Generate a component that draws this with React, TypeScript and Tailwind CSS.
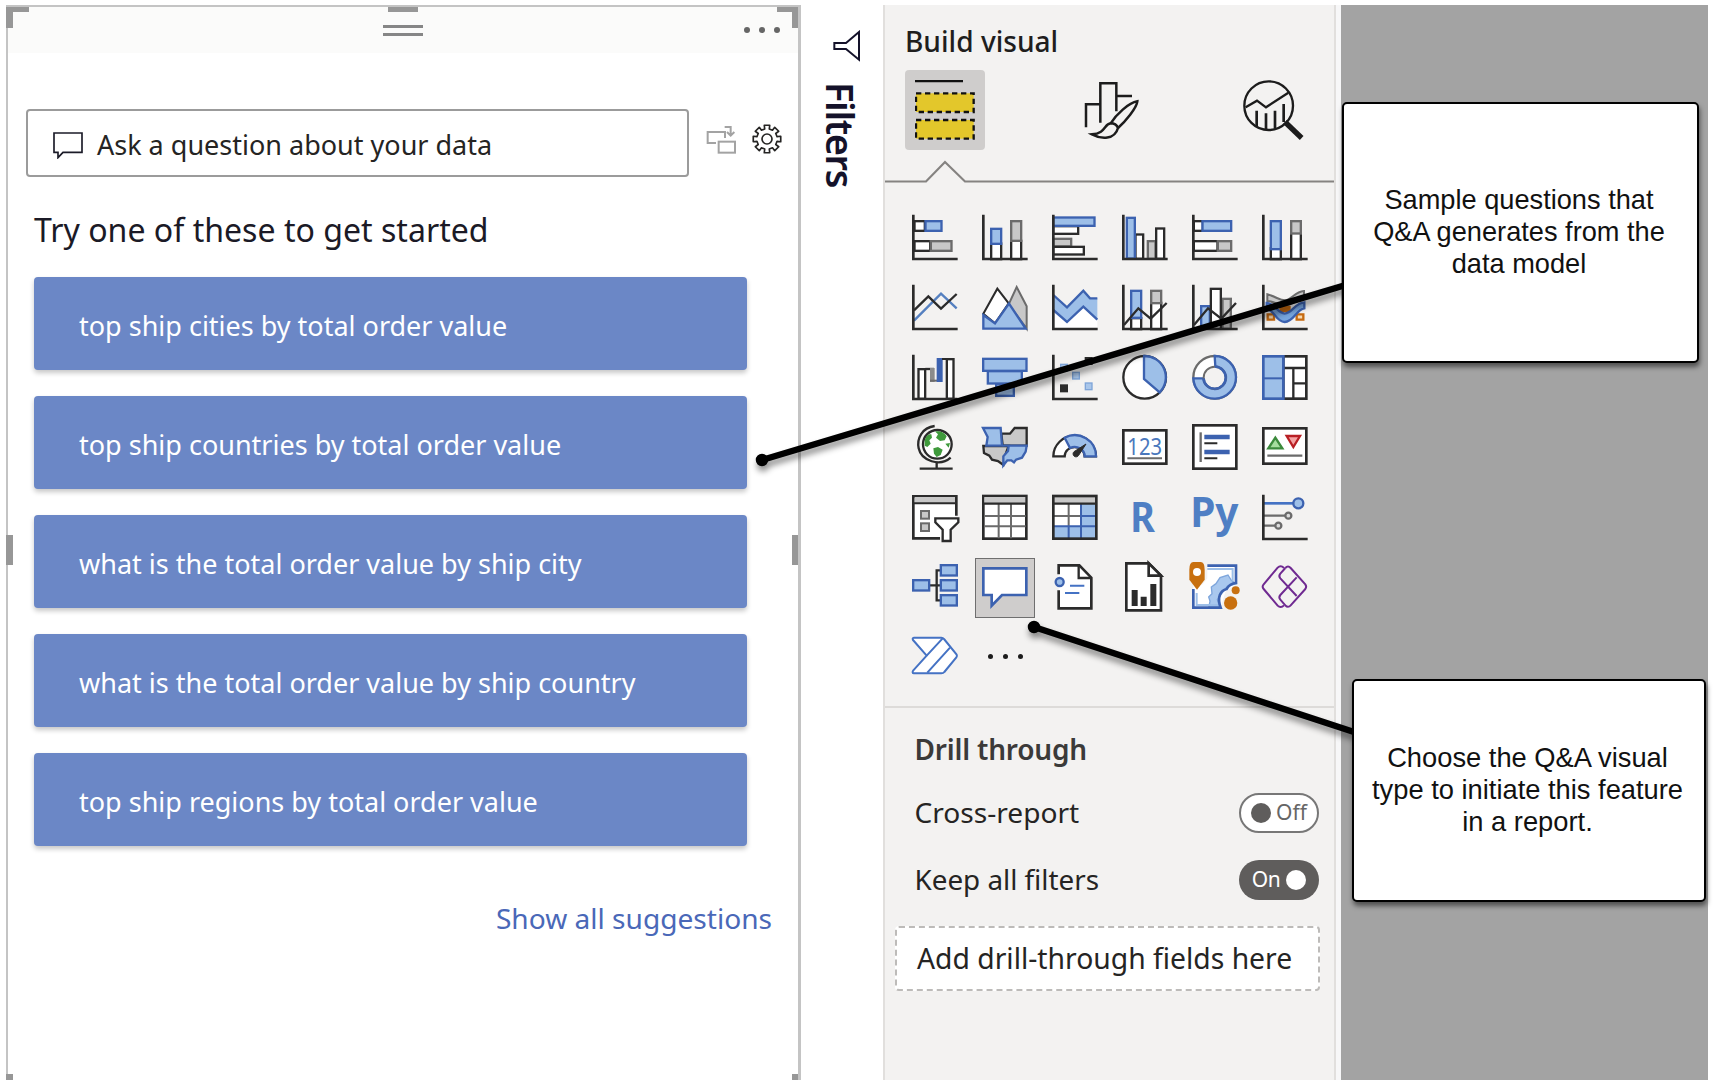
import React from "react";

const INK = "#2b2b2b";
const BLUE = "#9dbfe8";
const LINE = "#3c62b0";
const GREY = "#c8c8c8";
const EDGE = "#6b6b6b";

const suggestions = [
  "top ship cities by total order value",
  "top ship countries by total order value",
  "what is the total order value by ship city",
  "what is the total order value by ship country",
  "top ship regions by total order value",
];

type BoxProps = { x: number; y: number; w: number; h: number; fill?: string; stroke?: string; sw?: number };

/* Rectangle given by its outer edges, with the stroke drawn inside. */
function Box({ x, y, w, h, fill = "#fff", stroke = INK, sw = 7 }: BoxProps) {
  return (
    <rect x={x + sw / 2} y={y + sw / 2} width={w - sw} height={h - sw} fill={fill} stroke={stroke} strokeWidth={sw} />
  );
}

function Axis() {
  return <path d="M4 -1V132H137" fill="none" stroke={INK} strokeWidth="8" />;
}

const P = (d: string, stroke: string, fill = "none", sw = 7) => (
  <path d={d} stroke={stroke} fill={fill} strokeWidth={sw} />
);

const icons: React.ReactNode[] = [
  /* stacked bar */
  <>
    <Box x={4} y={15} w={38} h={36} />
    <Box x={37} y={15} w={55} h={36} fill={BLUE} stroke={LINE} />
    <Box x={4} y={75} w={54} h={36} />
    <Box x={53} y={75} w={69} h={36} fill={GREY} stroke={EDGE} />
    <Axis />
  </>,
  /* stacked column */
  <>
    <Box x={24} y={82} w={37} h={54} />
    <Box x={24} y={38} w={37} h={52} fill={BLUE} stroke={LINE} />
    <Box x={84} y={74} w={37} h={62} />
    <Box x={84} y={15} w={37} h={66} fill={GREY} stroke={EDGE} />
    <Axis />
  </>,
  /* clustered bar */
  <>
    <Box x={0} y={30} w={82} h={30} />
    <Box x={0} y={68} w={61} h={30} fill={GREY} stroke={EDGE} />
    <Box x={0} y={92} w={99} h={30} />
    <Box x={0} y={4} w={131} h={32} fill={BLUE} stroke={LINE} />
    <Axis />
  </>,
  /* clustered column */
  <>
    <Box x={37} y={55} w={30} h={80} />
    <Box x={74} y={75} w={30} h={60} fill={GREY} stroke={EDGE} />
    <Box x={99} y={37} w={31} h={98} />
    <Box x={11} y={5} w={31} h={129} fill={BLUE} stroke={LINE} />
    <Axis />
  </>,
  /* 100% stacked bar */
  <>
    <Box x={2} y={15} w={34} h={36} />
    <Box x={28} y={15} w={93} h={36} fill={BLUE} stroke={LINE} />
    <Box x={2} y={75} w={78} h={36} />
    <Box x={74} y={75} w={47} h={36} fill={GREY} stroke={EDGE} />
    <Axis />
  </>,
  /* 100% stacked column */
  <>
    <Box x={23} y={96} w={37} h={40} />
    <Box x={23} y={15} w={37} h={91} fill={BLUE} stroke={LINE} />
    <Box x={84} y={50} w={36} h={86} />
    <Box x={84} y={15} w={36} h={44} fill={GREY} stroke={EDGE} />
    <Axis />
  </>,
  /* line */
  <>
    {P("M6 107L87 26L134 70", "#5580c0")}
    {P("M6 76L49 34L87 71L134 27", INK)}
    <Axis />
  </>,
  /* area */
  <>
    {P("M80 58L104 6L134 64V131L80 58Z", EDGE, GREY, 6)}
    {P("M4 86L46 11L80 55L39 115Z", INK, "#fff", 6)}
    {P("M4 90L39 115L81 56L131 131H4Z", LINE, BLUE)}
  </>,
  /* stacked area */
  <>
    <path d="M4 75L45 111L94 65L136 104V131H4Z" fill="#fff" />
    <path d="M4 30L45 67L94 17L114 40H136V104L94 65L45 111L4 75Z" fill={BLUE} />
    {P("M4 30L45 67L94 17L114 40H136", LINE)}
    {P("M4 75L45 111L94 65L136 104", LINE)}
    <Axis />
  </>,
  /* line and stacked column */
  <>
    <Box x={24} y={96} w={37} h={40} />
    <Box x={24} y={14} w={37} h={88} fill={BLUE} stroke={LINE} />
    <Box x={84} y={50} w={37} h={86} />
    <Box x={84} y={14} w={37} h={44} fill={GREY} stroke={EDGE} />
    {P("M6 120L49 70L86 101L134 54", INK)}
    <Axis />
  </>,
  /* line and clustered column */
  <>
    <Box x={24} y={60} w={33} h={74} fill={BLUE} stroke={LINE} />
    <Box x={88} y={38} w={32} h={97} fill={GREY} stroke={EDGE} />
    <Box x={53} y={8} w={37} h={127} />
    {P("M6 120L48 70L88 101L132 54", INK)}
    <Axis />
  </>,
  /* ribbon */
  <>
    <path d="M17 88H36V104H17ZM104 88H124V104H104Z" fill="#f6d9b0" stroke="#c66a10" strokeWidth="7" />
    <path d="M52 62H86V82H52Z" fill="#c66a10" />
    <path d="M16 28C46 36 50 46 70 46C90 44 98 20 126 18V36C100 44 96 60 70 60C46 60 40 50 16 48Z" fill={GREY} stroke={EDGE} strokeWidth="6" />
    <path d="M14 54C38 54 46 84 68 86C92 84 98 54 127 52V70C102 74 96 110 68 111C40 110 38 74 14 72Z" fill="#78a7e0" stroke={LINE} strokeWidth="7" />
    <Axis />
  </>,
  /* waterfall */
  <>
    <Box x={16} y={39} w={27} h={96} />
    <path d="M40 42H66" stroke={INK} strokeWidth="7" />
    <rect x="54" y="39" width="14" height="42" fill="#8b8b8b" />
    <path d="M54 77H78" stroke={EDGE} strokeWidth="6" />
    <rect x="74" y="9" width="18" height="72" fill={LINE} />
    <path d="M90 12H104" stroke={INK} strokeWidth="6" />
    <Box x={101} y={9} w={27} h={126} />
    <Axis />
  </>,
  /* funnel */
  <>
    <Box x={39} y={84} w={60} h={42} fill={BLUE} stroke={LINE} />
    <Box x={14} y={45} w={109} h={44} fill={BLUE} stroke={LINE} />
    <Box x={0} y={8} w={137} h={43} fill={BLUE} stroke={LINE} />
  </>,
  /* scatter */
  <>
    <rect x="24" y="88" width="24" height="24" fill={INK} />
    <Box x={60} y={50} w={24} h={24} fill="#a9c6ea" stroke="#7fa5d8" sw={4} />
    <Box x={98} y={82} w={24} h={24} fill="#a9c6ea" stroke="#7fa5d8" sw={4} />
    <Box x={24} y={26} w={24} h={24} fill="#a9c6ea" stroke="#7fa5d8" sw={4} />
    <rect x="98" y="6" width="24" height="24" fill={INK} />
    <Axis />
  </>,
  /* pie */
  <>
    <circle cx="68" cy="67" r="64" fill="#fff" stroke={INK} strokeWidth="7" />
    {P("M66 3A64 64 0 0 1 113 112L66 72Z", LINE, BLUE)}
  </>,
  /* donut */
  <>
    <circle cx="68" cy="67" r="64" fill="#fff" stroke={EDGE} strokeWidth="7" />
    {P("M68 3A64 64 0 1 1 4 70H34A34 34 0 1 0 70 34Z", LINE, BLUE)}
    <circle cx="68" cy="68" r="33" fill="#f3f2f1" stroke={EDGE} strokeWidth="6" />
    {P("M35 70A33 33 0 1 0 68 35", LINE)}
  </>,
  /* treemap */
  <>
    <Box x={60} y={0} w={77} h={135} sw={8} />
    <path d="M64 39H134M94 39V132M94 85H134" stroke={INK} strokeWidth="7" />
    <Box x={0} y={0} w={68} h={135} fill={BLUE} stroke={LINE} sw={8} />
    <path d="M2 70H64" stroke={LINE} strokeWidth="6" />
  </>,
  /* map (globe) */
  <>
    <path d="M68 3C30 8 14 40 20 70C28 108 84 126 116 98" fill="none" stroke={INK} strokeWidth="7" />
    <circle cx="76" cy="58" r="43" fill="#fff" stroke={INK} strokeWidth="7" />
    <path d="M38 48C40 34 50 26 58 28L60 38L52 46L56 56L46 66L38 62ZM70 20C84 16 98 24 104 34L98 46L84 48L72 38L78 28ZM64 70L78 66L92 74L86 90L74 96L66 86ZM100 56L114 54L110 68Z" fill="#3f9a3c" />
    <path d="M74 112V131M23 131H122" stroke={INK} strokeWidth="7" />
  </>,
  /* filled map */
  <>
    {P("M58 26H84L98 9H134V62H62Z", INK, GREY)}
    {P("M4 63H80L72 84L64 120L48 108L30 104L22 92L6 84Z", INK, GREY)}
    {P("M3 9H56L60 62H13L17 36Z", LINE, BLUE)}
    {P("M62 62H134L131 80L120 98L102 104L96 112L88 106H76L64 121V94L78 78L80 63", LINE, BLUE)}
  </>,
  /* gauge */
  <>
    {P("M4 94A64 62 0 0 1 132 94H98A30 28 0 0 0 38 94Z", INK, "#fff")}
    {P("M38 38A64 62 0 0 1 132 94H98A30 28 0 0 0 54 69Z", LINE, BLUE)}
    <path d="M102 57L80 91A9 9 0 1 1 66 80Z" fill={INK} stroke={INK} strokeWidth="3" />
  </>,
  /* card */
  <>
    <Box x={0} y={12} w={137} h={108} sw={8} />
    <text x="68" y="89" textAnchor="middle" fontFamily="Noto Sans" fontSize="68" fontWeight="400" fill="#4a78bd" textLength="104" lengthAdjust="spacingAndGlyphs">123</text>
    <path d="M16 100H120" stroke={EDGE} strokeWidth="6" />
  </>,
  /* multi-row card */
  <>
    <Box x={0} y={-3} w={137} h={138} sw={8} />
    <path d="M26 22V111" stroke={EDGE} strokeWidth="7" />
    <path d="M37 36H113M37 81H113" stroke={LINE} strokeWidth="14" />
    <path d="M37 55H76M37 100H76" stroke={INK} strokeWidth="6" />
  </>,
  /* KPI */
  <>
    <Box x={0} y={6} w={137} h={114} sw={8} />
    {P("M40 38L61 70H19Z", "#3c8a3c", "#a6dd9f")}
    {P("M74 33H114L94 66Z", "#b81f24", "#f4a3a3")}
    <path d="M16 92H121" stroke={EDGE} strokeWidth="7" />
  </>,
  /* slicer */
  <>
    <path d="M133 62V4H4V130H84" fill="#fff" stroke={INK} strokeWidth="8" />
    <rect x="8" y="6" width="121" height="18" fill={GREY} />
    <path d="M4 25H133" stroke={INK} strokeWidth="6" />
    <Box x={24} y={45} w={30} h={29} fill={GREY} stroke={EDGE} sw={6} />
    <Box x={24} y={82} w={30} h={29} fill={GREY} stroke={EDGE} sw={6} />
    <path d="M70 70H139V82L116 104V138H92V104L70 82Z" fill="#fff" stroke={INK} strokeWidth="7" />
  </>,
  /* table */
  <>
    <Box x={0} y={-1} w={137} h={136} sw={8} />
    <rect x="7" y="6" width="123" height="18" fill={GREY} />
    <path d="M50 26V130M87 26V130M6 63H131M6 94H131" stroke={EDGE} strokeWidth="6" />
    <path d="M4 26H133" stroke={INK} strokeWidth="7" />
  </>,
  /* matrix */
  <>
    <rect x="4" y="4" width="129" height="128" fill="#fff" />
    <path d="M87 26H132V131H4V94H87Z" fill={BLUE} />
    <path d="M50 26V94M6 63H87" stroke={EDGE} strokeWidth="6" />
    <path d="M87 26V130M50 94V130M87 63H131M6 94H131" stroke={LINE} strokeWidth="6" />
    <rect x="7" y="4" width="123" height="20" fill={GREY} />
    <Box x={0} y={-1} w={137} h={136} sw={8} fill="none" />
    <path d="M4 26H133" stroke={INK} strokeWidth="7" />
  </>,
  /* R */
  <text x="62" y="110" textAnchor="middle" fontFamily="Noto Sans" fontSize="123" fontWeight="700" fill="#4f7fc4" textLength="74" lengthAdjust="spacingAndGlyphs">R</text>,
  /* Python */
  <text x="67" y="95" textAnchor="middle" fontFamily="Noto Sans" fontSize="123" fontWeight="700" fill="#4f7fc4" textLength="145" lengthAdjust="spacingAndGlyphs">Py</text>,
  /* key influencers */
  <>
    <path d="M6 25H94" stroke="#4472c4" strokeWidth="8" />
    <path d="M6 62H70M6 92H40" stroke={EDGE} strokeWidth="7" />
    <circle cx="109" cy="25" r="15" fill={BLUE} stroke={LINE} strokeWidth="7" />
    <circle cx="79" cy="62" r="9" fill="#ddd" stroke={EDGE} strokeWidth="7" />
    <circle cx="49" cy="92" r="9" fill="#ddd" stroke={EDGE} strokeWidth="7" />
    <Axis />
  </>,
  /* decomposition tree */
  <>
    <path d="M50 61H90M92 16H74V106H92" fill="none" stroke={INK} strokeWidth="7" />
    <Box x={0} y={42} w={55} h={38} fill={BLUE} stroke={LINE} />
    <Box x={83} y={-3} w={55} h={38} fill={BLUE} stroke={LINE} />
    <Box x={83} y={42} w={55} h={38} fill={BLUE} stroke={LINE} />
    <Box x={83} y={87} w={55} h={38} fill={BLUE} stroke={LINE} />
  </>,
  /* Q&A */
  <path d="M4 10H133V90H60L29 122V90H4Z" fill="#fff" stroke={LINE} strokeWidth="8" />,
  /* smart narrative */
  <>
    <path d="M20 1H82L118 38V130H20Z" fill="#fff" />
    <path d="M20 28V1H82L118 38V130H20V76" fill="none" stroke={INK} strokeWidth="8" />
    <path d="M80 1V39H118" fill="none" stroke={INK} strokeWidth="7" />
    <circle cx="23" cy="51" r="12" fill={BLUE} stroke={LINE} strokeWidth="7" />
    <path d="M54 62H97M39 84H82" stroke="#4472c4" strokeWidth="6" />
  </>,
  /* paginated report */
  <>
    <path d="M13 -5H80L117 32V136H13Z" fill="#fff" stroke={INK} strokeWidth="8" />
    <path d="M80 -5V32H117Z" fill="#fff" stroke={INK} strokeWidth="8" />
    <path d="M38 75V123M65 95V123M94 57V123" stroke={INK} strokeWidth="18" />
  </>,
  /* ArcGIS map */
  <>
    <path d="M46 1H133V58L100 80L86 130H4V60H30L46 40Z" fill="#fff" />
    <path d="M108 30L118 46L132 56L106 64L90 84L76 104L84 130H50L54 108L50 96L60 86L58 66L72 56L84 38Z" fill="#a9c8ee" stroke="#7ea6dc" strokeWidth="4" />
    <path d="M46 2H132V54C112 56 108 66 104 72C86 76 74 96 86 128H4V72" fill="none" stroke={LINE} strokeWidth="8" />
    <path d="M46 12H122V48M14 84V120H78" fill="none" stroke="#9dbfe8" strokeWidth="6" />
    <path d="M-8 14Q-8 -9 4 -9H26Q38 -9 38 14V44L15 74L-8 44Z" fill="#c8700f" />
    <circle cx="15" cy="21" r="12" fill="#fff" />
    <circle cx="131" cy="76" r="12" fill="#c8700f" />
    <circle cx="116" cy="114" r="20" fill="#c8700f" />
  </>,
  /* Power Apps */
  <g fill="none" stroke="#6f2a91" strokeWidth="6" strokeLinejoin="round">
    <path d="M66 9Q56 -1 47 8L5 58Q-1 65 5 72L47 122Q56 131 66 121" />
    <path d="M70 9Q78 0 86 9L130 58Q135 65 130 72L86 121Q78 130 70 121L55 104Q49 97 55 90L104 37" />
    <path d="M70 9L55 26Q49 33 55 40L104 93" />
  </g>,
  /* Power Automate */
  <g fill="#fff" stroke="#4472c4" strokeWidth="6" strokeLinejoin="round">
    <path d="M6 8H88Q93 8 96 12L134 59Q136 63 133 67L97 111Q94 115 88 115H6Q-1 114 4 106L44 62L3 15Q0 9 6 8Z" />
    <path d="M44 62L92 10M46 113L114 38" />
  </g>,
];

function Toggle({ on }: { on?: boolean }) {
  return on ? (
    <div className="flex h-10 w-20 items-center justify-center gap-[6px] rounded-full bg-[#5f5d5c] text-white">
      <span className="text-[21px] leading-none tracking-tight">On</span>
      <span className="size-5 rounded-full bg-white" />
    </div>
  ) : (
    <div className="flex h-10 w-20 items-center justify-center gap-[5px] rounded-full border-2 border-[#777] bg-white text-[#666]">
      <span className="size-5 rounded-full bg-[#5f5d5c]" />
      <span className="text-[21px] leading-none">Off</span>
    </div>
  );
}

function Handles() {
  return (
    <>
      <div className="absolute -left-0.5 top-0 h-[21px] w-[23px] border-l-[7px] border-t-[5px] border-[#979797]" />
      <div className="absolute right-0 top-0 h-[21px] w-[21px] border-r-[6px] border-t-[5px] border-[#979797]" />
      <div className="absolute left-[380px] top-0 h-[5px] w-[30px] bg-[#979797]" />
      <div className="absolute -left-0.5 top-[528px] h-[30px] w-[7px] bg-[#979797]" />
      <div className="absolute right-0 top-[528px] h-[30px] w-[6px] bg-[#979797]" />
      <div className="absolute -left-0.5 bottom-0 h-[6px] w-[7px] bg-[#979797]" />
      <div className="absolute bottom-0 right-0 h-[6px] w-[6px] bg-[#979797]" />
    </>
  );
}

function QnaVisual() {
  return (
    <section className="relative ml-1.5 h-[1075px] w-[795px] shrink-0 border-l-2 border-r-[3px] border-t-2 border-[#c4c4c4] bg-white">
      <header className="flex h-[46px] items-start bg-[#fbfbfa]">
        <div className="ml-[375px] mt-[18px] h-[11px] w-10 border-y-[3px] border-[#868686]" />
        <div className="ml-auto mr-[18px] mt-5 flex gap-[9px]">
          <span className="size-1.5 rounded-full bg-[#666]" />
          <span className="size-1.5 rounded-full bg-[#666]" />
          <span className="size-1.5 rounded-full bg-[#666]" />
        </div>
      </header>
      <Handles />

      <div className="mt-14 flex items-center pl-[18px]">
        <div className="flex h-[68px] w-[663px] items-center rounded border-2 border-[#9b9b9b] pl-[25px]">
          <svg className="mt-1 h-7 w-[30px]" viewBox="0 0 90 84" fill="none" stroke="#1b1b28" strokeWidth="5">
            <path d="M3 6H87V64H30L15 80V64H3Z" />
          </svg>
          <span className="ml-3.5 mt-0.5 text-[27px] leading-none text-[#252423]">Ask a question about your data</span>
        </div>
        <svg className="mb-2 ml-[17px] h-[30px] w-[31px]" viewBox="0 0 93 90" fill="none" stroke="#a3a3a3" strokeWidth="6">
          <path d="M30 57H5V24H57V42" />
          <rect x="38" y="53" width="49" height="33" />
          <path d="M56 9H74V32M63 24L74 35L85 24" />
        </svg>
        <svg className="mb-2 ml-[15px] size-[30px]" viewBox="0 0 90 90" fill="none" stroke="#252423" strokeWidth="5">
          <circle cx="45" cy="45" r="15" />
          <path d="M38.1 14.8L36.8 3.8L53.2 3.8L51.9 14.8L61.4 18.7L68.2 9.9L80.1 21.8L71.3 28.6L75.2 38.1L86.2 36.8L86.2 53.2L75.2 51.9L71.3 61.4L80.1 68.2L68.2 80.1L61.4 71.3L51.9 75.2L53.2 86.2L36.8 86.2L38.1 75.2L28.6 71.3L21.8 80.1L9.9 68.2L18.7 61.4L14.8 51.9L3.8 53.2L3.8 36.8L14.8 38.1L18.7 28.6L9.9 21.8L21.8 9.9L28.6 18.7Z" strokeLinejoin="round" />
        </svg>
      </div>

      <h2 className="ml-[26px] mt-[33px] text-[32.1px] leading-10 text-[#1b1a26]">Try one of these to get started</h2>

      <ul className="ml-[26px] mt-[26.5px] flex w-[713px] flex-col gap-[26px]">
        {suggestions.map((s) => (
          <li
            key={s}
            className="flex h-[93.2px] items-center rounded-[4px] bg-[#6b87c6] pl-[45px] pt-1 text-[27px] leading-none text-white shadow-[0_3px_5px_rgba(0,0,0,0.22)]"
          >
            {s}
          </li>
        ))}
      </ul>

      <div className="mr-[26px] mt-[53px] text-right text-[28.1px] leading-[38px] text-[#4a68b8]">Show all suggestions</div>
    </section>
  );
}

function FiltersRail() {
  return (
    <aside className="flex w-[82px] shrink-0 flex-col bg-white">
      <svg className="ml-8 mt-[25px] h-8 w-7" viewBox="0 0 84 96" fill="none" stroke="#14122a" strokeWidth="6">
        <path d="M78 6V89L39 57H4V39H39Z" />
      </svg>
      <span className="ml-[15px] mt-[19.5px] w-[50px] text-[38px] font-semibold leading-[50px] tracking-[-1.4px] text-[#14122a] [writing-mode:vertical-rl]">
        Filters
      </span>
    </aside>
  );
}

function BuildTabs() {
  return (
    <div className="mt-[10px] flex items-center pl-5">
      <div className="flex size-20 items-center justify-center rounded bg-[#cfcdcc]">
        <svg className="size-[60px]" viewBox="0 0 180 180">
          <path d="M0 3H144" stroke="#111" strokeWidth="7" />
          <rect x="3" y="40" width="173" height="56" fill="#e3c72b" stroke="#111" strokeWidth="7" strokeDasharray="16 11" />
          <rect x="3" y="120" width="173" height="56" fill="#e3c72b" stroke="#111" strokeWidth="7" strokeDasharray="16 11" />
        </svg>
      </div>
      <svg className="ml-[99px] h-[57px] w-[55px]" viewBox="0 0 165 171" fill="none" stroke="#1c1c1c" strokeWidth="7.5">
        <path d="M6 136V67H49M49 122V4H97V88M97 42H144" />
        <path d="M80 124C96 98 134 62 160 58C158 78 124 118 102 138" fill="#f3f2f1" />
        <path d="M80 124C60 126 66 154 24 157C52 172 92 174 102 138C98 128 90 124 80 124Z" fill="#f3f2f1" />
      </svg>
      <svg className="ml-[104px] h-[61px] w-[61px]" viewBox="0 0 183 183" fill="none" stroke="#1c1c1c" strokeWidth="7">
        <circle cx="77" cy="77" r="73" />
        <path d="M8 82L42 62L69 82L136 38" />
        <path d="M41 92V138M69 100V148M96 92V146M122 72V126" strokeWidth="8" />
        <path d="M126 126L176 174" strokeWidth="16" />
      </svg>
    </div>
  );
}

function BuildPane() {
  return (
    <section className="flex h-[1075px] w-[453px] shrink-0 flex-col border-x-2 border-[#e1dfdd] bg-[#f3f2f1] text-[#252423]">
      <h1 className="ml-5 mt-[17px] text-[28.1px] font-medium leading-[38px] text-[#1f1e1d]">Build visual</h1>
      <BuildTabs />
      <svg className="mt-[9px] h-6 w-[449px]" viewBox="0 0 449 24" fill="none" stroke="#858381" strokeWidth="2.2">
        <path d="M0 22.5H41L60 3L80 22.5H449" />
      </svg>
      <div className="ml-[15px] mt-5 grid [grid-auto-rows:70px] [grid-template-columns:repeat(6,70px)]">
        {icons.map((icon, i) => (
          <div key={i} className="flex items-center justify-center">
            <div
              className={
                i === 31
                  ? "flex size-[60px] shrink-0 items-center justify-center border border-[#6f6f6f] bg-[#cfcdcc]"
                  : "flex size-[60px] shrink-0 items-center justify-center"
              }
            >
              <svg className="size-[46px] overflow-visible" viewBox="0 0 138 138">
                {icon}
              </svg>
            </div>
          </div>
        ))}
        <div className="flex items-center justify-center gap-2.5 pb-1">
          <span className="size-[5px] rounded-full bg-[#1c1c1c]" />
          <span className="size-[5px] rounded-full bg-[#1c1c1c]" />
          <span className="size-[5px] rounded-full bg-[#1c1c1c]" />
        </div>
      </div>

      <div className="mt-[13px] border-t-2 border-[#dddbd9] pl-[29.5px] pr-[15px] pt-[22px]">
        <h3 className="text-[28px] font-semibold leading-[38px] tracking-[-0.2px] text-[#3b3a39]">Drill through</h3>
        <div className="mt-[24.5px] flex h-10 items-center justify-between">
          <span className="text-[28.1px] leading-none">Cross-report</span>
          <Toggle />
        </div>
        <div className="mt-[27px] flex h-10 items-center justify-between">
          <span className="text-[27.8px] leading-none">Keep all filters</span>
          <Toggle on />
        </div>
      </div>
      <div className="ml-[10px] mt-[26px] flex h-[65px] w-[425px] items-center rounded-[4px] border-2 border-dashed border-[#bdbbb9] bg-white pl-5">
        <span className="text-[28.3px] leading-none">Add drill-through fields here</span>
      </div>
    </section>
  );
}

function Callouts() {
  return (
    <>
      <svg className="pointer-events-none absolute inset-0 h-[1085px] w-[1713px] [filter:drop-shadow(1px_5px_3px_rgba(0,0,0,0.45))]" viewBox="0 0 1713 1085" stroke="#000" strokeWidth="6.5">
        <path d="M762 460L1344 285.5M1034 627L1354 732" />
        <circle cx="762" cy="460" r="3" />
        <circle cx="1034" cy="627" r="3" />
      </svg>
      <div className="absolute left-[1342px] top-[102px] flex h-[261px] w-[357px] items-center justify-center rounded-[5px] border-2 border-black bg-white pb-px pr-[3px] text-center font-['Liberation_Sans',sans-serif] text-[27.2px] leading-8 text-[#111] shadow-[1px_4px_5px_rgba(0,0,0,0.5)]">
        <p>
          Sample questions that
          <br />
          Q&amp;A generates from the
          <br />
          data model
        </p>
      </div>
      <div className="absolute left-[1352px] top-[679px] flex h-[223px] w-[354px] items-center justify-center rounded-[5px] border-2 border-black bg-white pb-px pr-[3px] text-center font-['Liberation_Sans',sans-serif] text-[27.3px] leading-8 text-[#111] shadow-[1px_4px_5px_rgba(0,0,0,0.5)]">
        <p>
          Choose the Q&amp;A visual
          <br />
          type to initiate this feature
          <br />
          in a report.
        </p>
      </div>
    </>
  );
}

export default function App() {
  return (
    <main className="relative flex h-[1085px] w-[1713px] overflow-hidden bg-white pt-[5px] font-['Noto_Sans',sans-serif]">
      <QnaVisual />
      <FiltersRail />
      <BuildPane />
      <div className="h-[1075px] w-[5px] bg-[#f7f7f8]" />
      <div className="h-[1075px] w-[367px] bg-[#a3a3a3]" />
      <Callouts />
    </main>
  );
}
